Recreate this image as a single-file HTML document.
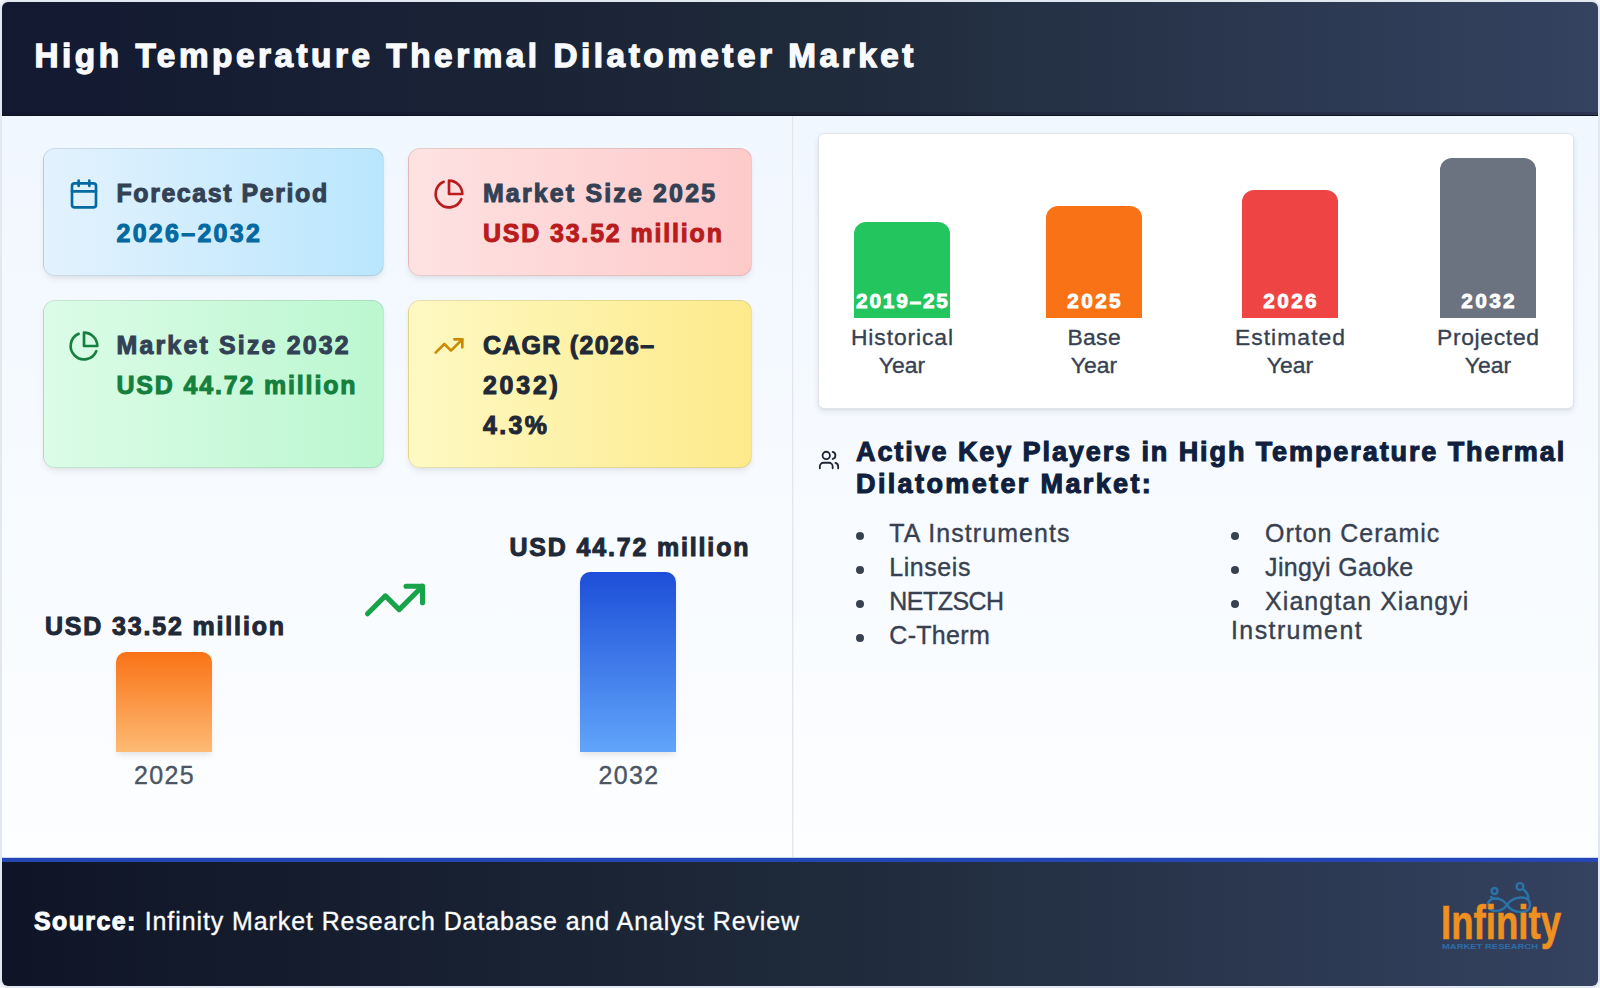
<!DOCTYPE html>
<html><head><meta charset="utf-8"><title>High Temperature Thermal Dilatometer Market</title>
<style>
html,body{margin:0;padding:0;width:1600px;height:988px;overflow:hidden;background:#f1f5f9;}
body{font-family:"Liberation Sans",sans-serif;position:relative;}
.frame{position:absolute;left:0;top:0;width:1596px;height:984px;border:2px solid #e2e8f0;border-radius:8px;overflow:hidden;
  background:linear-gradient(180deg,#eff6ff 0%,#ffffff 100%);}
.abs{position:absolute;}
.t{position:absolute;white-space:nowrap;}
.ic{position:absolute;overflow:visible;}
.hdr{position:absolute;left:2px;top:2px;width:1596px;height:114px;box-sizing:border-box;background:linear-gradient(90deg,#121931 0%,#1e2939 50%,#354260 100%);border-radius:6px 6px 0 0;border-bottom:1px solid #0e1322;box-shadow:inset 0 -3px 0 rgba(20,15,40,.25);}
.ftr{position:absolute;left:2px;top:858px;width:1596px;height:128px;background:linear-gradient(90deg,#0f1526 0%,#1e2939 50%,#354260 100%);border-top:4px solid #2547b5;box-sizing:border-box;border-radius:0 0 6px 6px;}
.vdiv{position:absolute;left:792px;top:116px;width:1px;height:741px;background:#e4e5ea;box-shadow:1px 0 0 #f3f4f8;}
.card{position:absolute;box-sizing:border-box;border:1px solid rgba(15,23,42,.1) !important;border-radius:12px;box-shadow:0 4px 6px -1px rgba(0,0,0,.08),0 2px 4px -2px rgba(0,0,0,.05);}
.bar{position:absolute;border-radius:10px 10px 0 0;box-shadow:0 4px 6px -1px rgba(0,0,0,.1);}
.tcard{position:absolute;box-sizing:border-box;background:#fff;border:1px solid #e3e3ea;border-radius:6px;box-shadow:0 3px 6px rgba(40,30,80,.09),0 1px 2px rgba(0,0,0,.06);}
.tbar{position:absolute;border-radius:12px 12px 0 0;}
.dot{position:absolute;width:8px;height:8px;border-radius:50%;background:#374151;}
</style></head>
<body>
<div class="frame"></div>
<div class="hdr"></div>
<div class="vdiv"></div>
<div class="ftr"></div>
<div class="abs" style="left:2px;top:857px;width:1596px;height:1px;background:#c3d7f3"></div>
<div class="t " style="left:34.50px;top:34.33px;font-size:33.28px;line-height:43.26px;font-weight:700;letter-spacing:3.554px;color:#f8fafc;-webkit-text-stroke:1.33px #f8fafc;">High Temperature Thermal Dilatometer Market</div>
<div class="card" style="left:43px;top:148px;width:341px;height:128px;background:linear-gradient(90deg,#e3f2fd 0%,#bae6fd 100%);border-color:#b9d7ee"></div>
<svg class="ic" style="left:68px;top:177.5px;width:32px;height:32px" viewBox="0 0 24 24" fill="none" stroke="#0369a1" stroke-width="2" stroke-linecap="round" stroke-linejoin="round"><rect width="18" height="18" x="3" y="4" rx="2"/><path d="M16 2v4M8 2v4M3 10h18"/></svg>
<div class="t " style="left:116.50px;top:176.82px;font-size:24.96px;line-height:32.45px;font-weight:700;letter-spacing:1.573px;color:#334155;-webkit-text-stroke:1.00px #334155;">Forecast Period</div>
<div class="t " style="left:116.50px;top:216.82px;font-size:24.96px;line-height:32.45px;font-weight:700;letter-spacing:2.306px;color:#0369a1;-webkit-text-stroke:1.00px #0369a1;">2026–2032</div>
<div class="card" style="left:408px;top:148px;width:344px;height:128px;background:linear-gradient(90deg,#fee2e2 0%,#fecaca 100%);border-color:#f5c6c6"></div>
<svg class="ic" style="left:433px;top:177.5px;width:32px;height:32px" viewBox="0 0 24 24" fill="none" stroke="#b91c1c" stroke-width="2" stroke-linecap="round" stroke-linejoin="round"><path d="M21.21 15.89A10 10 0 1 1 8 2.83"/><path d="M22 12A10 10 0 0 0 12 2v10z"/></svg>
<div class="t " style="left:482.90px;top:176.82px;font-size:24.96px;line-height:32.45px;font-weight:700;letter-spacing:2.161px;color:#334155;-webkit-text-stroke:1.00px #334155;">Market Size 2025</div>
<div class="t " style="left:482.90px;top:216.82px;font-size:24.96px;line-height:32.45px;font-weight:700;letter-spacing:1.850px;color:#b91c1c;-webkit-text-stroke:1.00px #b91c1c;">USD 33.52 million</div>
<div class="card" style="left:43px;top:300px;width:341px;height:168px;background:linear-gradient(90deg,#dcfce7 0%,#bbf7d0 100%);border-color:#bfe9cf"></div>
<svg class="ic" style="left:68px;top:329.5px;width:32px;height:32px" viewBox="0 0 24 24" fill="none" stroke="#15803d" stroke-width="2" stroke-linecap="round" stroke-linejoin="round"><path d="M21.21 15.89A10 10 0 1 1 8 2.83"/><path d="M22 12A10 10 0 0 0 12 2v10z"/></svg>
<div class="t " style="left:116.50px;top:328.82px;font-size:24.96px;line-height:32.45px;font-weight:700;letter-spacing:2.161px;color:#334155;-webkit-text-stroke:1.00px #334155;">Market Size 2032</div>
<div class="t " style="left:116.50px;top:368.82px;font-size:24.96px;line-height:32.45px;font-weight:700;letter-spacing:1.850px;color:#15803d;-webkit-text-stroke:1.00px #15803d;">USD 44.72 million</div>
<div class="card" style="left:408px;top:300px;width:344px;height:168px;background:linear-gradient(90deg,#fef9c3 0%,#fdea8b 100%);border-color:#f3e3a6"></div>
<svg class="ic" style="left:433px;top:329.5px;width:32px;height:32px" viewBox="0 0 24 24" fill="none" stroke="#ca8a04" stroke-width="2" stroke-linecap="round" stroke-linejoin="round"><polyline points="22 7 13.5 15.5 8.5 10.5 2 17"/><polyline points="16 7 22 7 22 13"/></svg>
<div class="t " style="left:482.90px;top:328.82px;font-size:24.96px;line-height:32.45px;font-weight:700;letter-spacing:1.312px;color:#1f2937;-webkit-text-stroke:1.00px #1f2937;">CAGR (2026–</div>
<div class="t " style="left:482.90px;top:368.82px;font-size:24.96px;line-height:32.45px;font-weight:700;letter-spacing:2.794px;color:#1f2937;-webkit-text-stroke:1.00px #1f2937;">2032)</div>
<div class="t " style="left:482.90px;top:408.82px;font-size:24.96px;line-height:32.45px;font-weight:700;letter-spacing:2.426px;color:#1f2937;-webkit-text-stroke:1.00px #1f2937;">4.3%</div>
<div class="t " style="left:-434.57px;width:1200px;text-align:center;top:609.72px;font-size:24.96px;line-height:32.45px;font-weight:700;letter-spacing:1.850px;color:#1f2937;-webkit-text-stroke:1.00px #1f2937;">USD 33.52 million</div>
<div class="bar" style="left:116px;top:652px;width:96px;height:100px;background:linear-gradient(180deg,#f97316,#fdba74)"></div>
<div class="t " style="left:-435.50px;width:1200px;text-align:center;top:758.72px;font-size:24.96px;line-height:32.45px;font-weight:400;letter-spacing:1.391px;color:#4b5563;-webkit-text-stroke:0.37px #4b5563;">2025</div>
<svg class="ic" style="left:361.5px;top:567.3px;width:66px;height:66px" viewBox="0 0 24 24" fill="none" stroke="#16a34a" stroke-width="1.85" stroke-linecap="round" stroke-linejoin="round"><polyline points="22 7 13.5 15.5 8.5 10.5 2 17"/><polyline points="16 7 22 7 22 13"/></svg>
<div class="t " style="left:29.93px;width:1200px;text-align:center;top:531.42px;font-size:24.96px;line-height:32.45px;font-weight:700;letter-spacing:1.850px;color:#1f2937;-webkit-text-stroke:1.00px #1f2937;">USD 44.72 million</div>
<div class="bar" style="left:580px;top:572px;width:96px;height:180px;background:linear-gradient(180deg,#1d4ed8,#60a5fa)"></div>
<div class="t " style="left:29.00px;width:1200px;text-align:center;top:758.82px;font-size:24.96px;line-height:32.45px;font-weight:400;letter-spacing:1.391px;color:#4b5563;-webkit-text-stroke:0.37px #4b5563;">2032</div>
<div class="tcard" style="left:818px;top:133px;width:756px;height:276px"></div>
<div class="tbar" style="left:854px;top:222px;width:96px;height:96px;background:#22c55e"></div>
<div class="t " style="left:302.90px;width:1200px;text-align:center;top:286.57px;font-size:20.8px;line-height:27.04px;font-weight:700;letter-spacing:1.799px;color:#ffffff;-webkit-text-stroke:0.83px #ffffff;">2019–25</div>
<div class="t " style="left:302.45px;width:1200px;text-align:center;top:323.10px;font-size:22.88px;line-height:29.74px;font-weight:400;letter-spacing:0.900px;color:#374151;-webkit-text-stroke:0.34px #374151;">Historical</div>
<div class="t " style="left:302.04px;width:1200px;text-align:center;top:351.00px;font-size:22.88px;line-height:29.74px;font-weight:400;letter-spacing:0.090px;color:#374151;-webkit-text-stroke:0.34px #374151;">Year</div>
<div class="tbar" style="left:1046px;top:206px;width:96px;height:112px;background:#f97316"></div>
<div class="t " style="left:495.18px;width:1200px;text-align:center;top:286.57px;font-size:20.8px;line-height:27.04px;font-weight:700;letter-spacing:2.359px;color:#ffffff;-webkit-text-stroke:0.83px #ffffff;">2025</div>
<div class="t " style="left:494.18px;width:1200px;text-align:center;top:323.10px;font-size:22.88px;line-height:29.74px;font-weight:400;letter-spacing:0.363px;color:#374151;-webkit-text-stroke:0.34px #374151;">Base</div>
<div class="t " style="left:494.04px;width:1200px;text-align:center;top:351.00px;font-size:22.88px;line-height:29.74px;font-weight:400;letter-spacing:0.090px;color:#374151;-webkit-text-stroke:0.34px #374151;">Year</div>
<div class="tbar" style="left:1242px;top:190px;width:96px;height:128px;background:#ef4444"></div>
<div class="t " style="left:691.18px;width:1200px;text-align:center;top:286.57px;font-size:20.8px;line-height:27.04px;font-weight:700;letter-spacing:2.359px;color:#ffffff;-webkit-text-stroke:0.83px #ffffff;">2026</div>
<div class="t " style="left:690.53px;width:1200px;text-align:center;top:323.10px;font-size:22.88px;line-height:29.74px;font-weight:400;letter-spacing:1.050px;color:#374151;-webkit-text-stroke:0.34px #374151;">Estimated</div>
<div class="t " style="left:690.04px;width:1200px;text-align:center;top:351.00px;font-size:22.88px;line-height:29.74px;font-weight:400;letter-spacing:0.090px;color:#374151;-webkit-text-stroke:0.34px #374151;">Year</div>
<div class="tbar" style="left:1440px;top:158px;width:96px;height:160px;background:#6b7280"></div>
<div class="t " style="left:889.18px;width:1200px;text-align:center;top:286.57px;font-size:20.8px;line-height:27.04px;font-weight:700;letter-spacing:2.359px;color:#ffffff;-webkit-text-stroke:0.83px #ffffff;">2032</div>
<div class="t " style="left:888.34px;width:1200px;text-align:center;top:323.10px;font-size:22.88px;line-height:29.74px;font-weight:400;letter-spacing:0.681px;color:#374151;-webkit-text-stroke:0.34px #374151;">Projected</div>
<div class="t " style="left:888.04px;width:1200px;text-align:center;top:351.00px;font-size:22.88px;line-height:29.74px;font-weight:400;letter-spacing:0.090px;color:#374151;-webkit-text-stroke:0.34px #374151;">Year</div>
<svg class="ic" style="left:817.7px;top:448.6px;width:22px;height:22px" viewBox="0 0 24 24" fill="none" stroke="#1f2937" stroke-width="2" stroke-linecap="round" stroke-linejoin="round"><path d="M16 21v-2a4 4 0 0 0-4-4H6a4 4 0 0 0-4 4v2"/><circle cx="9" cy="7" r="4"/><path d="M22 21v-2a4 4 0 0 0-3-3.87"/><path d="M16 3.13a4 4 0 0 1 0 7.75"/></svg>
<div class="t " style="left:856.00px;top:435.35px;font-size:27.04px;line-height:35.15px;font-weight:700;letter-spacing:1.895px;color:#0f1f3d;-webkit-text-stroke:1.08px #0f1f3d;">Active Key Players in High Temperature Thermal</div>
<div class="t " style="left:856.00px;top:467.05px;font-size:27.04px;line-height:35.15px;font-weight:700;letter-spacing:2.360px;color:#0f1f3d;-webkit-text-stroke:1.08px #0f1f3d;">Dilatometer Market:</div>
<div class="dot" style="left:856px;top:532.2px"></div>
<div class="t " style="left:889.30px;top:516.82px;font-size:24.96px;line-height:32.45px;font-weight:400;letter-spacing:1.103px;color:#374151;-webkit-text-stroke:0.37px #374151;">TA Instruments</div>
<div class="dot" style="left:856px;top:566.0px"></div>
<div class="t " style="left:889.30px;top:550.62px;font-size:24.96px;line-height:32.45px;font-weight:400;letter-spacing:0.574px;color:#374151;-webkit-text-stroke:0.37px #374151;">Linseis</div>
<div class="dot" style="left:856px;top:599.9px"></div>
<div class="t " style="left:889.30px;top:584.52px;font-size:24.96px;line-height:32.45px;font-weight:400;letter-spacing:-0.509px;color:#374151;-webkit-text-stroke:0.37px #374151;">NETZSCH</div>
<div class="dot" style="left:856px;top:634.1px"></div>
<div class="t " style="left:889.30px;top:618.72px;font-size:24.96px;line-height:32.45px;font-weight:400;letter-spacing:0.324px;color:#374151;-webkit-text-stroke:0.37px #374151;">C-Therm</div>
<div class="dot" style="left:1230.5px;top:532.2px"></div>
<div class="t " style="left:1265.10px;top:516.82px;font-size:24.96px;line-height:32.45px;font-weight:400;letter-spacing:0.987px;color:#374151;-webkit-text-stroke:0.37px #374151;">Orton Ceramic</div>
<div class="dot" style="left:1230.5px;top:566.0px"></div>
<div class="t " style="left:1265.10px;top:550.62px;font-size:24.96px;line-height:32.45px;font-weight:400;letter-spacing:0.353px;color:#374151;-webkit-text-stroke:0.37px #374151;">Jingyi Gaoke</div>
<div class="dot" style="left:1230.5px;top:599.9px"></div>
<div class="t " style="left:1265.10px;top:584.52px;font-size:24.96px;line-height:32.45px;font-weight:400;letter-spacing:1.067px;color:#374151;-webkit-text-stroke:0.37px #374151;">Xiangtan Xiangyi</div>
<div class="t " style="left:1231.00px;top:614.32px;font-size:24.96px;line-height:32.45px;font-weight:400;letter-spacing:1.417px;color:#374151;-webkit-text-stroke:0.37px #374151;">Instrument</div>
<div class="t" style="left:34px;top:905.05px;line-height:32px;color:#fff;font-size:24.96px"><b style="letter-spacing:1.415px;-webkit-text-stroke:1.00px #f8fafc">Source:</b><span style="letter-spacing:0.921px;font-size:24.96px;-webkit-text-stroke:0.37px #f1f5f9"> Infinity Market Research Database and Analyst Review</span></div>
<svg class="ic" style="left:1436px;top:876px;width:130px;height:80px" viewBox="0 0 130 80">
<g fill="none" stroke="#2b73a6" stroke-width="2.4" stroke-linecap="round">
<path d="M71 29C66 21 52 20 52 29C52 37 65 37 71 29C77 20 94 18 94 29C94 39 77 38 71 29Z"/>
<circle cx="58.5" cy="15" r="3"/><circle cx="84" cy="10.5" r="3.4"/>
<path d="M55 21c2 1.5 5 2 7 1.5M88 14c2.5 2 4 5 4.5 8"/>
</g>
<text x="5" y="63" font-family="Liberation Sans" font-weight="700" font-size="47.5" fill="#f0901e" stroke="#f0901e" stroke-width="0.6" textLength="120" lengthAdjust="spacingAndGlyphs">Infinity</text>
<text x="6" y="72.8" font-family="Liberation Sans" font-weight="700" font-size="7.2" fill="#2d6ea8" textLength="96" lengthAdjust="spacingAndGlyphs">MARKET RESEARCH</text>
</svg>
</body></html>
